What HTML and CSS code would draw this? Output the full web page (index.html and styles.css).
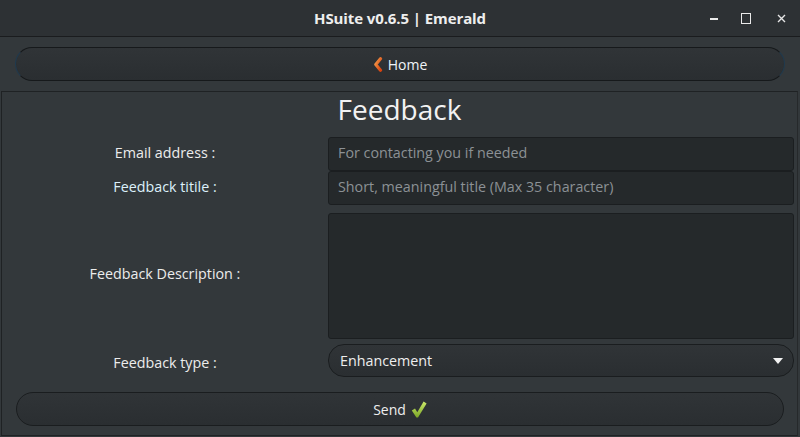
FILE: index.html
```html
<!DOCTYPE html>
<html>
<head>
<meta charset="utf-8">
<link rel="stylesheet" href="styles.css">
</head>
<body>
<div class="window">
  <header class="titlebar">
    <span class="title">HSuite v0.6.5 | Emerald</span>
    <div class="controls">
      <span class="ctl min"></span>
      <span class="ctl max"></span>
      <span class="ctl close">
        <svg width="9" height="9" viewBox="0 0 9 9"><path d="M1 1L8 8M8 1L1 8" stroke="#e6e6e6" stroke-width="1.4"/></svg>
      </span>
    </div>
  </header>
  <div class="content">
    <div class="topbar">
      <button class="pill home">
        <svg class="chev" width="10" height="15" viewBox="0 0 10 15"><defs><linearGradient id="cg" x1="0" y1="0" x2="1" y2="1"><stop offset="0" stop-color="#f39a4a"/><stop offset="1" stop-color="#d8430f"/></linearGradient></defs><path d="M7.5 1.8L2.8 7.5L7.5 13.2" fill="none" stroke="url(#cg)" stroke-width="3.2" stroke-linecap="round" stroke-linejoin="round"/></svg>
        <span>Home</span>
      </button>
    </div>
    <section class="panel">
      <h1 class="heading">Feedback</h1>
      <div class="form">
        <label class="lbl r-email">Email address :</label>
        <div class="field r-email"><span class="ph">For contacting you if needed</span></div>
        <label class="lbl r-title tint">Feedback titile :</label>
        <div class="field r-title"><span class="ph">Short, meaningful title (Max 35 character)</span></div>
        <label class="lbl r-desc">Feedback Description :</label>
        <div class="field r-desc"></div>
        <label class="lbl r-type">Feedback type :</label>
        <div class="pill combo r-type">
          <span>Enhancement</span>
          <svg width="10" height="6" viewBox="0 0 10 6"><path d="M0 0H10L5 6Z" fill="#f2f2f2"/></svg>
        </div>
      </div>
      <button class="pill send">
        <span>Send</span>
        <svg width="16" height="17" viewBox="0 0 16 17"><defs><linearGradient id="kg" x1="0" y1="0" x2="0" y2="1"><stop offset="0" stop-color="#cbe86a"/><stop offset="1" stop-color="#7aa526"/></linearGradient></defs><path d="M0.8 9.6L4 7.6L6.3 11.2L12.6 0.6L15.6 2.4L7 16.6L5.4 16.6Z" fill="url(#kg)"/></svg>
      </button>
    </section>
  </div>
</div>
</body>
</html>
```
FILE: styles.css
```css
* { box-sizing: border-box; }
html, body { margin: 0; padding: 0; background: #33383b; }
body { font-family: "Open Sans", "Noto Sans", sans-serif; color: #ececec; }

.window { width: 800px; height: 437px; display: flex; flex-direction: column; background: #33383b; overflow: hidden; }

.titlebar {
  height: 37px; flex: none; position: relative;
  display: flex; align-items: center; justify-content: center;
  background: #2d3134; border-bottom: 1px solid #1a1c1e;
}
.title { font-weight: 700; font-size: 15px; color: #eeeeee; letter-spacing: -0.1px; }
.controls { position: absolute; right: 0; top: 0; height: 36px; display: flex; align-items: center; }
.ctl { display: flex; align-items: center; justify-content: center; width: 32px; height: 36px; }
.min::before { content: ""; display: block; width: 8px; height: 1.5px; background: #eaeaea; margin-top: 2px; }
.max::before { content: ""; display: block; width: 8px; height: 9px; border: 1.3px solid #eaeaea; border-top-width: 1.6px; }
.controls .close { width: 38px; }

.content { flex: 1; display: flex; flex-direction: column; }
.topbar { padding: 10px 15px; flex: none; }

.pill {
  font-family: inherit; color: #eeeeee; font-size: 14px;
  border: 1px solid #1a1d1f; border-radius: 17px;
  background: linear-gradient(#303437, #2a2e31);
  display: flex; align-items: center; justify-content: center; gap: 5px;
  padding: 0; margin: 0;
}
.home {
  width: 100%; height: 34px;
  border-color: #16191b; border-left-color: #1f3a4f; border-right-color: #1f3a4f;
}
.home span { margin-top: 1px; color: #f0f4f8; }

.panel {
  flex: 1; margin: 0 2px 1px 1px;
  border: 1px solid #1f2224; border-right-color: #26292b;
  display: flex; flex-direction: column;
}
.heading {
  margin: 0; height: 45px; font-weight: 400; font-size: 28px; line-height: 34px;
  text-align: center; color: #f2f2f2;
}
.form {
  display: grid; grid-template-columns: 326px 466px;
  grid-template-rows: 34px 34px 8px 126px 5px 33px; align-items: center;
}
.r-email { grid-row: 1; }
.r-title { grid-row: 2; }
.r-desc { grid-row: 4; }
.r-type { grid-row: 6; }
.lbl { text-align: center; font-size: 14.3px; color: #ececec; }
.lbl.r-email, .lbl.r-title { margin-top: -4px; }
.lbl.r-desc { margin-top: -6px; }
.lbl.r-type { margin-top: 3px; }
.lbl.tint { color: #dcf0fa; }
.field {
  height: 100%; background: #25292b; border: 1px solid #1b1e20; border-radius: 3px;
  display: flex; align-items: center; padding-left: 9px;
}
.ph { color: #8c9195; font-size: 14.3px; margin-top: -4px; }
.combo {
  height: 33px; justify-content: space-between; padding: 0 10px 0 11px; border-radius: 16px;
}
.combo span { font-size: 14.3px; margin-top: -1px; }
.send { margin: 15px 13px 0 14px; height: 34px; width: auto; }
.send span { margin-top: 0; }
```
